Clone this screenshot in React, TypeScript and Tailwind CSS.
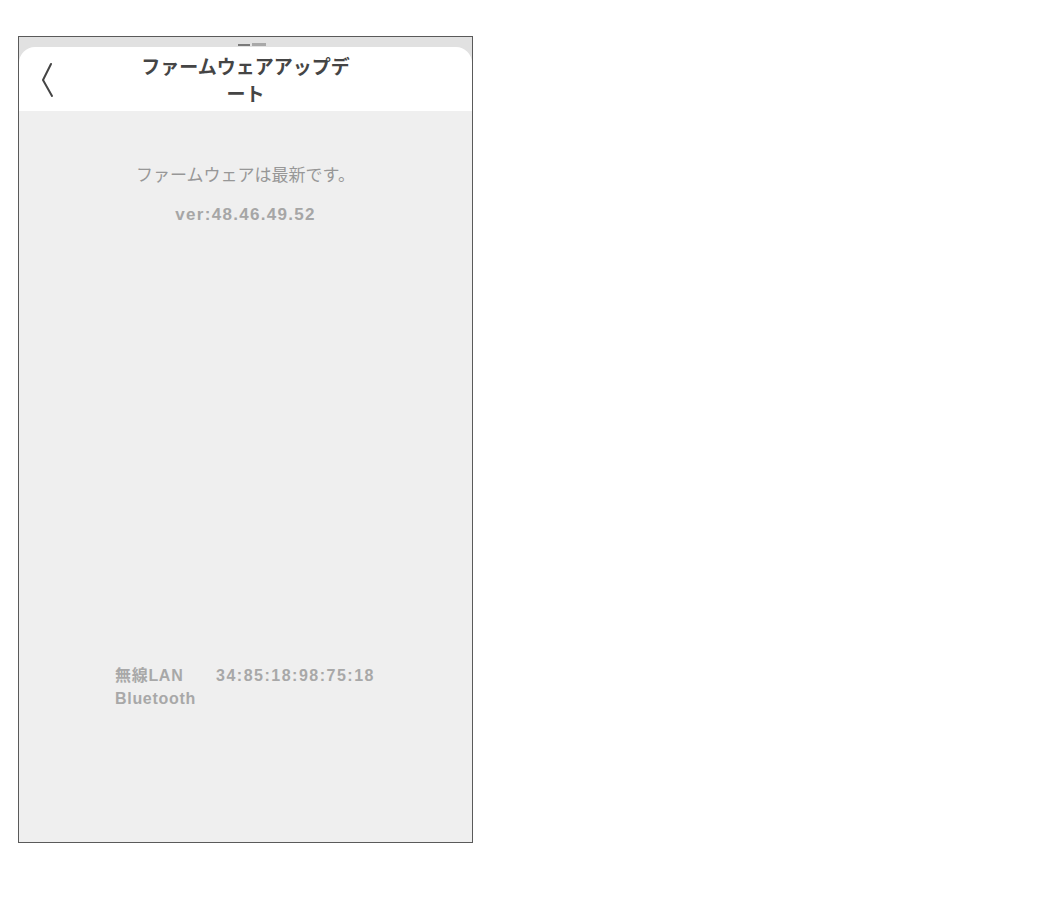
const font = { fontFamily: '"Liberation Sans", "Noto Sans CJK JP", sans-serif' };

const BackIcon = () => (
  <svg width="24" height="40" viewBox="0 0 24 40" fill="none">
    <path d="M15 4 L7 20 L16 36" stroke="#444" strokeWidth="2" strokeLinecap="round" strokeLinejoin="round" />
  </svg>
);

const InfoRow = ({ label, value }: { label: string; value?: string }) => (
  <div className="flex h-[23px] items-center">
    <span className="w-[101px] tracking-[0.7px]">{label}</span>
    {value && <span className="tracking-[1.5px]">{value}</span>}
  </div>
);

export default function App() {
  return (
    <div className="min-h-[906px] bg-white pt-[36px] pl-[18px]" style={font}>
      <div className="flex h-[807px] w-[455px] flex-col border border-[#5a5a5a] bg-[#e1e1e1]">
        {/* status bar remnant */}
        <div className="flex h-[10px] items-end justify-center">
          <div className="mb-[1px] ml-[12px] flex items-center gap-[2px]">
            <div className="h-[2px] w-[12px] bg-[#7a7a7a]" />
            <div className="h-[3px] w-[14px] bg-[#a8a8a8]" />
          </div>
        </div>

        <header className="relative flex h-[64px] flex-col items-center justify-center rounded-t-[16px] bg-white pt-[4px]">
          <div className="absolute left-[17px] top-[13px]">
            <BackIcon />
          </div>
          <h1 className="text-center text-[19px] font-semibold leading-[27px] text-[#454545]">
            ファームウェアアップデ
            <br />
            ート
          </h1>
        </header>

        <main className="flex flex-1 flex-col bg-[#efefef]">
          <div className="mt-[53px] flex flex-col items-center text-[17px] leading-[24px]">
            <p className="text-[#979797]">ファームウェアは最新です。</p>
            <p className="mt-[15px] font-bold tracking-[1.3px] text-[#a6a6a6]">ver:48.46.49.52</p>
          </div>

          <div className="mt-[437px] pl-[96px] text-[16px] font-bold text-[#a8a8a8]">
            <InfoRow label="無線LAN" value="34:85:18:98:75:18" />
            <InfoRow label="Bluetooth" />
          </div>
        </main>
      </div>
    </div>
  );
}
